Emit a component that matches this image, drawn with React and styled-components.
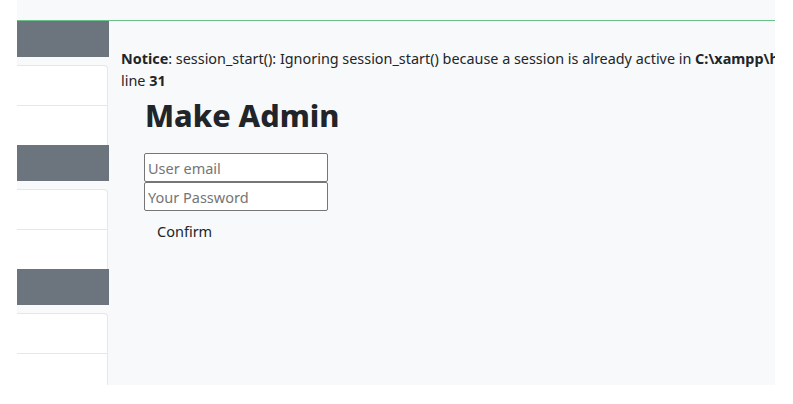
import React from 'react';
import styled, { createGlobalStyle } from 'styled-components';

const GlobalStyle = createGlobalStyle`
  html, body {
    margin: 0;
    padding: 0;
    background: #ffffff;
  }
  body {
    font-family: "Noto Sans", "Open Sans", sans-serif;
    color: #212529;
  }
`;

const Frame = styled.div`
  margin-left: 17px;
  width: 758px;
  height: 385px;
  background: #f8f9fa;
  display: flex;
  flex-direction: column;
  overflow: hidden;
`;

const TopBar = styled.div`
  height: 20px;
  flex-shrink: 0;
  border-bottom: 1px solid #6abf8b;
`;

const Body = styled.div`
  flex: 1;
  display: flex;
  min-height: 0;
`;

const Sidebar = styled.div`
  width: 92px;
  flex-shrink: 0;
  display: flex;
  flex-direction: column;
  overflow: hidden;
`;

const SideHeader = styled.div`
  height: 36px;
  flex-shrink: 0;
  background: #6c757d;
  margin-bottom: 8px;
`;

const SideCard = styled.div`
  flex-shrink: 0;
  margin-right: 1px;
  background: #ffffff;
  border: 1px solid #e6e7e8;
  border-left: none;
  border-bottom: none;
  border-radius: 0 4px 0 0;
`;

const SideItem = styled.div`
  height: 39px;
  border-top: ${(p) => (p.first ? 'none' : '1px solid #e6e7e8')};
`;

const Main = styled.div`
  flex: 1;
  padding: 27px 0 0 12px;
  overflow: hidden;
`;

const Notice = styled.div`
  font-size: 14.4px;
  line-height: 22px;
  white-space: nowrap;
`;

const Form = styled.form`
  margin: 3px 0 0 23px;
  display: flex;
  flex-direction: column;
  align-items: flex-start;
`;

const Title = styled.h1`
  margin: 0 0 18px 1px;
  font-size: 30.5px;
  line-height: 40px;
  font-weight: 800;
  color: #212529;
`;

const Input = styled.input`
  box-sizing: border-box;
  width: 184px;
  height: 29px;
  margin: 0;
  padding: 0 3px;
  border: 1px solid #767676;
  border-radius: 2px;
  background: #ffffff;
  font-family: "Noto Sans", "Open Sans", sans-serif;
  font-size: 14.5px;
  color: #212529;
  &::placeholder {
    color: #757575;
  }
`;

const Button = styled.button`
  margin-top: 2px;
  padding: 6px 12px;
  border: 1px solid transparent;
  background: transparent;
  font-family: "Noto Sans", "Open Sans", sans-serif;
  font-size: 14.5px;
  line-height: 22px;
  color: #212529;
`;

const groups = [0, 1, 2];

export default function App() {
  return (
    <>
      <GlobalStyle />
      <Frame>
        <TopBar />
        <Body>
          <Sidebar>
            {groups.map((g) => (
              <React.Fragment key={g}>
                <SideHeader />
                <SideCard>
                  <SideItem first />
                  <SideItem />
                </SideCard>
              </React.Fragment>
            ))}
          </Sidebar>
          <Main>
            <Notice>
              <b>Notice</b>: session_start(): Ignoring session_start() because a session is already active in <b>C:\xampp\htdocs\admin\make_admin.php</b> on
              <br />
              line <b>31</b>
            </Notice>
            <Form onSubmit={(e) => e.preventDefault()}>
              <Title>Make Admin</Title>
              <Input type="email" placeholder="User email" />
              <Input type="password" placeholder="Your Password" />
              <Button type="submit">Confirm</Button>
            </Form>
          </Main>
        </Body>
      </Frame>
    </>
  );
}
